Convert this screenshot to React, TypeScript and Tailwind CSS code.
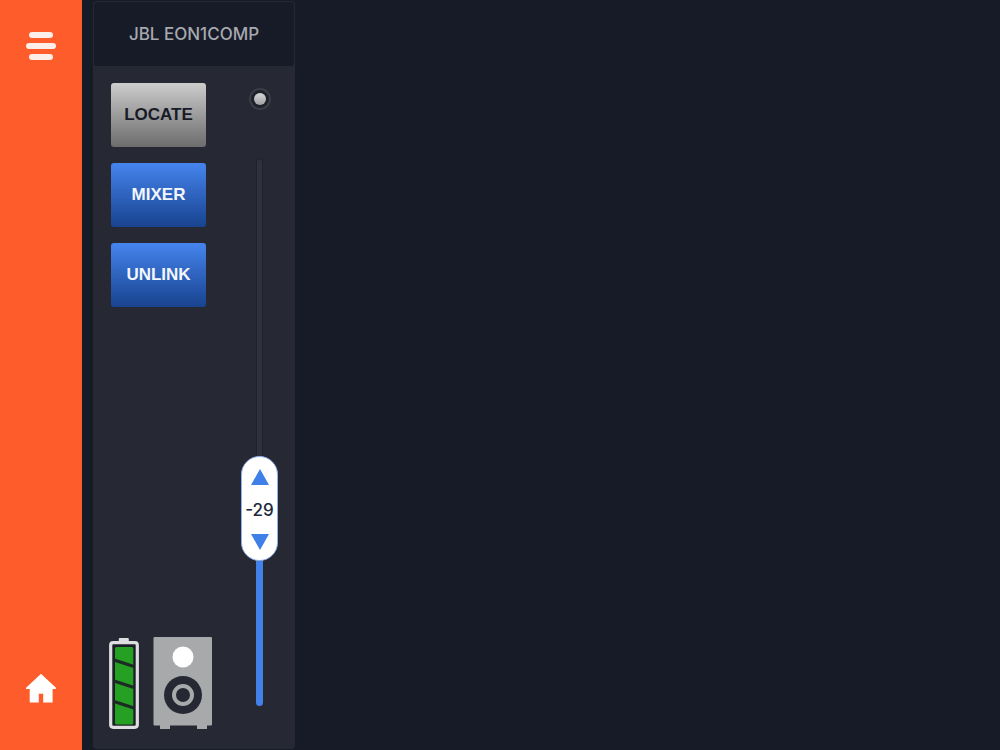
import React, { useState } from 'react';

type Action = {
  label: string;
  tone: 'gray' | 'blue';
};

const actions: Action[] = [
  { label: 'LOCATE', tone: 'gray' },
  { label: 'MIXER', tone: 'blue' },
  { label: 'UNLINK', tone: 'blue' },
];

const tones = {
  gray: 'from-[#cdcdce] to-[#6d6d6e] text-[#171b27]',
  blue: 'from-[#4685ee] to-[#184390] text-[#f3f6fc]',
};

const MIN_LEVEL = -48;
const MAX_LEVEL = 10;

const HomeIcon = () => (
  <svg viewBox="0 0 30 29" className="h-[29px] w-[30px]" fill="white" aria-hidden="true">
    <path d="M15.7.4 29.7 13.6c.6.6.3 1.4-.5 1.4h-2.6v13.4H17.2v-8.6h-4.4v8.6H3.7V15H.8c-.8 0-1.1-.8-.5-1.4L14.3.4c.4-.4 1-.4 1.4 0Z" />
  </svg>
);

const BatteryIcon = () => (
  <svg viewBox="0 0 30 92" className="h-[92px] w-[30px]" role="img" aria-label="Battery full">
    <rect x="9.8" y="1" width="10" height="5" rx="1" fill="#dedee2" />
    <rect x="1.7" y="5.7" width="26.6" height="84.6" rx="2.5" fill="#1c1f29" stroke="#dedee2" strokeWidth="3.2" />
    <rect x="6" y="10" width="18.3" height="77.5" rx="1.5" fill="#25a022" />
    <path d="M5 23 25 29.5M5 44 25 50.5M5 64.5 25 71" stroke="#1c2a25" strokeWidth="3.2" />
  </svg>
);

const SpeakerIcon = () => (
  <svg viewBox="0 0 59 92" className="h-[92px] w-[59px]" role="img" aria-label="Speaker">
    <rect x="0.5" width="58.5" height="88.5" rx="1" fill="#a8a9ab" />
    <path d="M7 88h10v4H7zM44 88h10v4H44z" fill="#a8a9ab" />
    <circle cx="30" cy="20" r="10.5" fill="white" />
    <circle cx="30" cy="58" r="19" fill="#262833" />
    <circle cx="30" cy="58" r="9" fill="#262833" stroke="#a8a9ab" strokeWidth="4" />
  </svg>
);

const Fader = () => {
  const [level, setLevel] = useState(-29);
  const step = (amount: number) =>
    setLevel((current) => Math.min(MAX_LEVEL, Math.max(MIN_LEVEL, current + amount)));

  return (
    <div className="relative flex w-[37px] flex-1 flex-col items-center">
      <input
        type="range"
        aria-label="Level"
        min={MIN_LEVEL}
        max={MAX_LEVEL}
        value={level}
        onChange={(e) => setLevel(Number(e.target.value))}
        className="absolute inset-0 h-full w-full cursor-pointer opacity-0 [direction:rtl] [writing-mode:vertical-lr]"
      />
      <div
        className="w-[7px] basis-0 rounded-t-full border border-b-0 border-[#1f212b] bg-[#2f313c]"
        style={{ flexGrow: MAX_LEVEL - level }}
      />
      <div className="relative flex h-[105px] w-[37px] shrink-0 flex-col items-center justify-between rounded-full border border-[#8fb2ee] bg-white pt-3 pb-2.5">
        <button type="button" aria-label="Level up" onClick={() => step(1)}>
          <svg viewBox="0 0 18 16" className="block h-4 w-[18px]" fill="#3f7fe8">
            <path d="M9 0 18 16H0Z" />
          </svg>
        </button>
        <span className="text-[17px] leading-5 font-medium text-[#20283b]">{level}</span>
        <button type="button" aria-label="Level down" onClick={() => step(-1)}>
          <svg viewBox="0 0 18 16" className="block h-4 w-[18px]" fill="#3f7fe8">
            <path d="M0 0H18L9 16Z" />
          </svg>
        </button>
      </div>
      <div
        className="w-[7px] basis-0 rounded-b-full bg-[#4280ea]"
        style={{ flexGrow: level - MIN_LEVEL }}
      />
    </div>
  );
};

const ChannelStrip = () => (
  <section className="flex w-[202px] flex-col rounded-sm bg-[#262833]">
    {/* Device name */}
    <header className="flex h-[66px] shrink-0 items-center justify-center rounded-sm border border-[#262833] bg-[#171b27]">
      <h2 className="text-[17px] leading-5 font-medium text-[#a7a9b0]">JBL EON1COMP</h2>
    </header>

    <div className="flex flex-1 justify-between pt-4 pr-[17px] pb-5 pl-4">
      <div className="flex flex-col justify-between gap-8">
        <div className="flex flex-col gap-4 px-0.5">
          {actions.map((action) => (
            <button
              key={action.label}
              type="button"
              className={`h-16 w-[95px] rounded-[3px] bg-linear-to-b font-['Liberation_Sans',sans-serif] text-[17px] font-bold ${tones[action.tone]}`}
            >
              {action.label}
            </button>
          ))}
        </div>
        <div className="flex gap-3.5">
          <BatteryIcon />
          <SpeakerIcon />
        </div>
      </div>

      {/* Signal light and level */}
      <div className="flex flex-col items-center gap-12 pt-[5px] pb-[23px]">
        <div className="flex size-[22px] items-center justify-center rounded-full border-2 border-[#3b3d47] bg-[#20222b]">
          <div className="size-3 rounded-full bg-linear-to-b from-[#d8d8d9] to-[#a0a0a2]" />
        </div>
        <Fader />
      </div>
    </div>
  </section>
);

const App = () => {
  return (
    <div className="flex min-h-screen bg-[#171b27] font-['Inter',sans-serif]">
      <nav className="flex w-[82px] shrink-0 flex-col items-center justify-between bg-[#ff5c2b] pt-8 pb-[47px]">
        <button type="button" aria-label="Menu" className="flex flex-col items-center gap-[5px]">
          <span className="h-1.5 w-6 rounded-full bg-[#fcefea]" />
          <span className="h-1.5 w-[30px] rounded-full bg-[#fcefea]" />
          <span className="h-1.5 w-6 rounded-full bg-[#fcefea]" />
        </button>
        <a href="#home" aria-label="Home">
          <HomeIcon />
        </a>
      </nav>
      <main className="flex flex-1 py-px pl-[11px]">
        <ChannelStrip />
      </main>
    </div>
  );
};

export default App;
